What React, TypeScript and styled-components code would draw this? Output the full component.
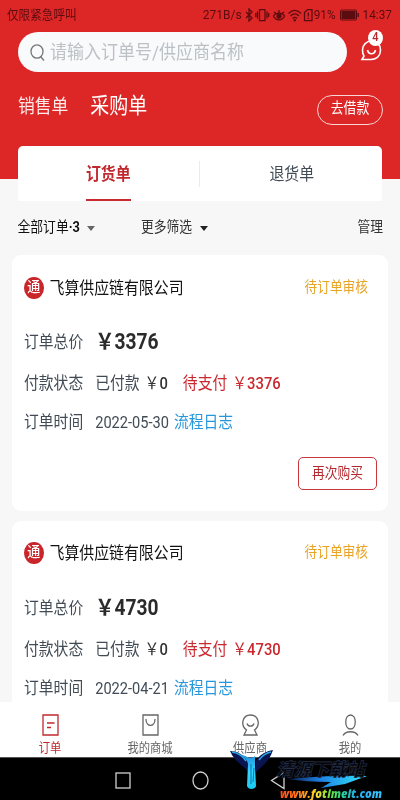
import React from "react";
import styled, { createGlobalStyle } from "styled-components";

const Global = createGlobalStyle`
  * { box-sizing: border-box; }
  body { margin: 0; background: #f7f7f7; font-family: Roboto, "Noto Sans CJK SC", sans-serif; color: #333; }
`;

const Screen = styled.div`
  width: 400px;
  height: 800px;
  overflow: hidden;
  display: flex;
  flex-direction: column;
  background: #f7f7f7;
`;

const Label = styled.span<{ $size: number; $color?: string; $weight?: number; $gap?: number }>`
  display: inline-block;
  white-space: pre;
  line-height: 20px;
  font-size: ${(p) => p.$size}px;
  font-weight: ${(p) => p.$weight ?? 400};
  color: ${(p) => p.$color ?? "inherit"};
  margin-left: ${(p) => p.$gap ?? 0}px;
  transform: scaleY(1.12);
`;

const Header = styled.header`
  height: 179px;
  flex: none;
  background: #dd2626;
  display: flex;
  flex-direction: column;
`;

const StatusBar = styled.div`
  height: 32px;
  padding: 0 8px 3px 7px;
  display: flex;
  align-items: center;
  justify-content: space-between;
  color: #5c0c10;
`;

const StatusIcons = styled.div`
  display: flex;
  align-items: center;
`;

const SearchRow = styled.div`
  height: 40px;
  padding: 0 17px 0 18px;
  display: flex;
  justify-content: space-between;
`;

const SearchBox = styled.div`
  width: 329px;
  height: 40px;
  border-radius: 20px;
  background: #f8fafc;
  display: flex;
  align-items: center;
  padding-left: 12px;
`;

const ChatButton = styled.div`
  position: relative;
  width: 24px;
  height: 32px;
`;

const Badge = styled.span`
  position: absolute;
  top: -2px;
  right: 0;
  width: 15px;
  height: 16px;
  border-radius: 50%;
  background: #fff;
  display: flex;
  align-items: center;
  justify-content: center;
`;

const ModeRow = styled.div`
  height: 68px;
  padding: 0 17px 0 18px;
  display: flex;
  align-items: center;
`;

const LoanButton = styled.div`
  width: 66px;
  height: 30px;
  margin: 7px 0 0 auto;
  border: 1px solid #fbd5d5;
  border-radius: 15px;
  display: flex;
  align-items: center;
  justify-content: center;
  padding-bottom: 2px;
`;

const Tabs = styled.nav`
  flex: none;
  height: 55px;
  margin: -33px 18px 0;
  background: #fff;
  border-radius: 5px 5px 2px 2px;
  display: flex;
`;

const Tab = styled.div<{ $active?: boolean }>`
  flex: 1;
  display: flex;
  flex-direction: column;
  align-items: center;
  justify-content: space-between;
  padding-top: 18px;
  &::after {
    content: "";
    width: 45px;
    height: 2px;
    background: ${(p) => (p.$active ? "#c82a30" : "transparent")};
  }
`;

const Divider = styled.div`
  width: 1px;
  height: 26px;
  margin: 15px 2px 0 0;
  background: #e9ebee;
`;

const FilterBar = styled.div`
  flex: none;
  height: 54px;
  padding: 0 17px 0 17.5px;
  display: flex;
  align-items: center;
`;

const Caret = styled.i<{ $color: string }>`
  margin: 0 0 0 7.5px;
  border: 4.5px solid transparent;
  border-top: 5px solid ${(p) => p.$color};
  border-bottom: 0;
`;

const FilterGroup = styled.div<{ $width: number }>`
  width: ${(p) => p.$width}px;
  display: flex;
  align-items: center;
`;

const List = styled.main`
  flex: 1;
  min-height: 0;
  overflow: hidden;
  padding: 0 12px;
  display: flex;
  flex-direction: column;
  gap: 10px;
`;

const Card = styled.article`
  flex: none;
  height: 255.5px;
  padding: 21px 11px 0 12px;
  border-radius: 9px;
  background: #fff;
`;

const CardHead = styled.div`
  height: 23px;
  display: flex;
  align-items: center;
`;

const Seal = styled.span`
  width: 19.5px;
  height: 22px;
  margin-right: 6px;
  border-radius: 50%;
  background: #c9252b;
  display: flex;
  align-items: center;
  justify-content: center;
`;

const State = styled.div`
  margin: -1px 9px 0 auto;
`;

const Line = styled.div<{ $top: number }>`
  height: 20px;
  margin-top: ${(p) => p.$top}px;
  display: flex;
  align-items: center;
`;

const Actions = styled.div`
  display: flex;
  justify-content: flex-end;
  margin-top: 25px;
`;

const OutlineButton = styled.div`
  width: 79px;
  height: 33px;
  border: 1px solid #c8363c;
  border-radius: 5px;
  display: flex;
  align-items: center;
  justify-content: center;
`;

const TabBar = styled.footer`
  flex: none;
  height: 54.5px;
  background: #fff;
  display: grid;
  grid-template-columns: repeat(4, 1fr);
`;

const BarItem = styled.div<{ $active?: boolean }>`
  display: flex;
  flex-direction: column;
  align-items: center;
  gap: 2px;
  padding-top: 12px;
  color: ${(p) => (p.$active ? "#c0282e" : "#666")};
`;

const SystemNav = styled.div`
  position: relative;
  flex: none;
  height: 43.5px;
  background: #000;
  border-top: 1px solid #555;
  display: flex;
  justify-content: center;
  align-items: center;
  gap: 61px;
  padding: 4px 0 0 0;
  color: #d0d0d0;
`;

const WingMark = styled.svg`
  position: absolute;
  left: 230px;
  top: -8px;
`;

const SlashMark = styled.svg`
  position: absolute;
  left: 285px;
  top: 17px;
`;

const SiteName = styled.div`
  position: absolute;
  left: 276px;
  top: -1px;
  font: italic 900 18px/22px "Noto Sans CJK SC", sans-serif;
  letter-spacing: -0.4px;
  white-space: nowrap;
  color: #05070d;
  -webkit-text-stroke: 0.6px #26304a;
`;

const SiteUrl = styled.div`
  position: absolute;
  left: 280px;
  top: 27px;
  font: italic 800 11.1px/16px "Open Sans", sans-serif;
  white-space: nowrap;
  transform: scaleY(1.15);
  color: transparent;
  background: linear-gradient(90deg, #ff4a1c 0%, #ff8a1c 22%, #ffe02a 36%, #5fe03a 50%, #25d8a0 62%, #22a8f0 75%, #38c8ff 100%);
  background-clip: text;
  -webkit-background-clip: text;
`;

type GlyphProps = { w: number; h: number; children: React.ReactNode; sw?: number };

const Glyph = ({ w, h, children, sw = 1.3 }: GlyphProps) => (
  <svg width={w} height={h} viewBox={`0 0 ${w} ${h}`} fill="none" stroke="currentColor" strokeWidth={sw}>
    {children}
  </svg>
);

const SystemIcons = () => (
  <Glyph w={69} h={14} sw={1.25}>
    <path d="M1 4l6 6-3 3V1l3 3-6 6" />
    <path d="M14.500 1.500h5.500v11h-5.500zM12.500 3.500v7M22 3.500v7M10.800 5v4M23.700 5v4" />
    <path d="M28.500 8c2-4 9-4 11 0-2 5-9 5-11 0zM29 4l2 1.500M34 2v2.500M39 4l-2 1.500" />
    <circle cx="34" cy="8" r="2" fill="currentColor" />
    <path d="M43.500 5.500c4-4 8.500-4 12.500 0M45.500 8c3-3 5.500-3 8.500 0M47.500 10.500c1.500-1.500 3-1.500 4.500 0" />
    <circle cx="49.700" cy="12.300" r=".6" fill="currentColor" />
    <path d="M59.500 4.500l3-3H67v11h-7.500zM63.300 4.500v4M63.300 9.800v1.300" />
  </Glyph>
);

const BatterySlot = styled.span`
  display: flex;
  margin: 0 4px;
`;

const Battery = () => (
  <BatterySlot>
    <Glyph w={19} h={12} sw={1}>
      <rect x=".5" y="1" width="16" height="10" rx="1" />
      <rect x="2" y="2.500" width="13" height="7" fill="currentColor" />
      <path d="M18.200 4v4" strokeWidth="1.500" />
    </Glyph>
  </BatterySlot>
);

type Order = { total: string; date: string };

const OrderCard = ({ total, date }: Order) => (
  <Card>
    <CardHead>
      <Seal>
        <Label $size={13} $color="#fff" $weight={500}>通</Label>
      </Seal>
      <Label $size={14.9} $color="#111">飞算供应链有限公司</Label>
      <State><Label $size={12.7} $color="#e8a323">待订单审核</Label></State>
    </CardHead>
    <Line $top={33}>
      <Label $size={14.8} $color="#414b55">订单总价</Label>
      <Label $size={19.2} $weight={700} $gap={12} $color="#2b2b2b">￥{total}</Label>
    </Line>
    <Line $top={21}>
      <Label $size={14.8} $color="#414b55">付款状态</Label>
      <Label $size={14.8} $gap={12} $color="#414b55">已付款</Label>
      <Label $size={14.8} $gap={5}>￥</Label>
      <Label $size={14.8} $weight={500}>0</Label>
      <Label $size={14.8} $color="#c8282e" $gap={15}>待支付</Label>
      <Label $size={14.8} $color="#c8282e" $gap={5}>￥</Label>
      <Label $size={14.8} $weight={500} $color="#c8282e">{total}</Label>
    </Line>
    <Line $top={19}>
      <Label $size={14.8} $color="#414b55">订单时间</Label>
      <Label $size={14.6} $gap={12} $color="#414b55">{date}</Label>
      <Label $size={14.8} $color="#2797dc" $gap={5}>流程日志</Label>
    </Line>
    <Actions>
      <OutlineButton><Label $size={12.8} $color="#b5282e">再次购买</Label></OutlineButton>
    </Actions>
  </Card>
);

const orders: Order[] = [
  { total: "3376", date: "2022-05-30" },
  { total: "4730", date: "2022-04-21" },
];

const items = [
  { name: "订单", active: true, icon: <path d="M1 1h15v20H1zM5 9h7.500M5 13.500h4" /> },
  { name: "我的商城", active: false, icon: <path d="M1 1h15v20H1zM4 5c0 8.500 9 8.500 9 0" /> },
  { name: "供应商", active: false, icon: <path d="M4.500 16C-2 11 .500 1 8.500 1s10.500 10 4 15l2.500 5H2zM5 9.500c1 3.500 6 3.500 7 0" /> },
  { name: "我的", active: false, icon: <path d="M8.500 1c6.300 0 6.300 14 0 14s-6.300-14 0-14zM1 21.500c3-5 12-5 15 0" /> },
];

export default function App() {
  return (
    <Screen>
      <Global />
      <Header>
        <StatusBar>
          <Label $size={11.6}>仅限紧急呼叫</Label>
          <StatusIcons>
            <Label $size={12}>271B/s </Label>
            <SystemIcons />
            <Label $size={11.8}>91%</Label>
            <Battery />
            <Label $size={11.8}>14:37</Label>
          </StatusIcons>
        </StatusBar>
        <SearchRow>
          <SearchBox>
            <svg width="15" height="17" viewBox="0 0 15 17" fill="none" stroke="#777" strokeWidth="1.300">
              <ellipse cx="7" cy="7.500" rx="6" ry="6.700" />
              <path d="M10.500 12.500l3.500 4" />
            </svg>
            <Label $size={17} $color="#bcc1c5" $gap={5}>请输入订单号/供应商名称</Label>
          </SearchBox>
          <ChatButton>
            <svg width="24" height="32" viewBox="0 0 24 32" fill="none" stroke="#fff" strokeWidth="1.600">
              <path d="M3 27.500h9c6 0 9.500-4 9.500-9.500S17.500 9 12.500 9 3.500 13 3.500 18c0 2.500.3 4.500 1.500 6zM8.500 18c1 5 7 5 8 0" />
            </svg>
            <Badge><Label $size={11} $weight={500} $color="#b5282e">4</Label></Badge>
          </ChatButton>
        </SearchRow>
        <ModeRow>
          <Label $size={16.8} $color="#ffe9e9">销售单</Label>
          <Label $size={19} $color="#fff" $gap={22}>采购单</Label>
          <LoanButton><Label $size={12.8} $color="#fff">去借款</Label></LoanButton>
        </ModeRow>
      </Header>
      <Tabs>
        <Tab $active><Label $size={14.9} $weight={700} $color="#c0282e">订货单</Label></Tab>
        <Divider />
        <Tab><Label $size={14.9} $color="#414b55">退货单</Label></Tab>
      </Tabs>
      <FilterBar>
        <FilterGroup $width={123.5}>
          <Label $size={12.8} $color="#111">全部订单</Label>
          <Label $size={12.8} $weight={700} $color="#111">·3</Label>
          <Caret $color="#666" />
        </FilterGroup>
        <FilterGroup $width={199}>
          <Label $size={12.8}>更多筛选</Label>
          <Caret $color="#222" />
        </FilterGroup>
        <Label $size={12.8} $gap={17.5}>管理</Label>
      </FilterBar>
      <List>
        {orders.map((o) => <OrderCard key={o.total} {...o} />)}
      </List>
      <TabBar>
        {items.map((it) => (
          <BarItem key={it.name} $active={it.active}>
            <Glyph w={17} h={23}>{it.icon}</Glyph>
            <Label $size={11.3}>{it.name}</Label>
          </BarItem>
        ))}
      </TabBar>
      <SystemNav>
        <Glyph w={16} h={17}><rect x="1" y="1" width="14" height="15" /></Glyph>
        <Glyph w={17} h={19}><ellipse cx="8.500" cy="9.500" rx="7.500" ry="8.500" /></Glyph>
        <Glyph w={16} h={19}><path d="M14 1.500v16L1.500 9.500z" /></Glyph>
        <WingMark width="44" height="45" viewBox="0 0 44 45">
          <defs>
            <linearGradient id="blade" x1="0" y1="0" x2="0" y2="1">
              <stop offset="0" stopColor="#1f8fe0" />
              <stop offset=".5" stopColor="#36d6ff" />
              <stop offset="1" stopColor="#19c9f0" />
            </linearGradient>
          </defs>
          <path d="M0 1c6 0 12 3 15 7l3 3v11C15 16 5 13 0 1zM43 0c-6 1-12 4-15 8l-2 3v11C32 16 39 12 43 0z" fill="#0a1450" />
          <path d="M2 2c6 1 11 4 14 9M41 2c-5 1-9 4-12 8" fill="none" stroke="#2aa8e8" strokeWidth="1.500" />
          <path d="M11 5c4 0 7 3 9 3s4-1 5-2l0 10 1 20c-1 4-8 4-9 0l1-22C17 9 14 7 11 5z" fill="url(#blade)" />
          <path d="M21 14v20M24 18l-1 14" stroke="#0b6fa8" strokeWidth="1" />
        </WingMark>
        <SlashMark width="85" height="15" viewBox="0 0 85 15">
          <defs>
            <linearGradient id="slash" x1="0" y1="0" x2="1" y2="0">
              <stop offset="0" stopColor="#081845" />
              <stop offset=".4" stopColor="#1c7de0" />
              <stop offset="1" stopColor="#35ecff" />
            </linearGradient>
          </defs>
          <path d="M2 4C25 2 55 0 82 1L60 9l-24 4 10-6C30 7 15 6 2 4z" fill="url(#slash)" />
        </SlashMark>
        <SiteName>清源下载站</SiteName>
        <SiteUrl>www.fotimeit.com</SiteUrl>
      </SystemNav>
    </Screen>
  );
}
